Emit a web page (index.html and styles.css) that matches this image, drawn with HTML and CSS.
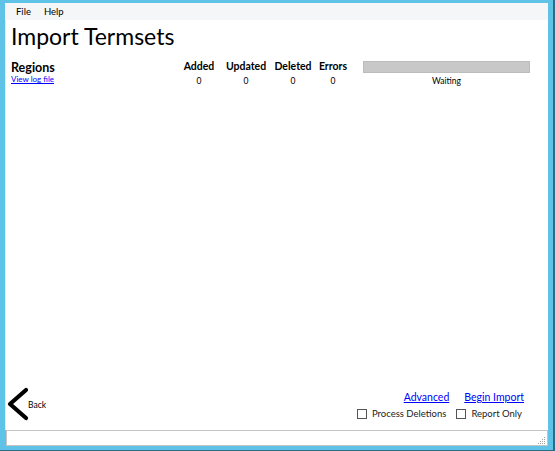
FILE: index.html
```html
<!DOCTYPE html>
<html>
<head>
<meta charset="utf-8">
<link rel="stylesheet" href="styles.css">
</head>
<body>
<div class="window">
  <div class="menubar">
    <span class="menu-item">File</span>
    <span class="menu-item">Help</span>
  </div>
  <div class="client">
    <h1 class="title">Import Termsets</h1>
    <div class="summary">
      <div class="regions">
        <div class="regions-label">Regions</div>
        <a class="log-link" href="#">View log file</a>
      </div>
      <div class="stats">
        <div class="stat-head">Added</div>
        <div class="stat-head">Updated</div>
        <div class="stat-head">Deleted</div>
        <div class="stat-head">Errors</div>
        <div class="progress"></div>
        <div class="stat-val">0</div>
        <div class="stat-val">0</div>
        <div class="stat-val">0</div>
        <div class="stat-val">0</div>
        <div class="progress-label">Waiting</div>
      </div>
    </div>
    <div class="spacer"></div>
    <div class="footer">
      <a class="back" href="#">
        <svg class="back-icon" width="22" height="34" viewBox="0 0 22 34">
          <polyline points="19,3 3,17 19,31" fill="none" stroke="#000" stroke-width="4.2" stroke-linecap="round" stroke-linejoin="round"/>
        </svg>
        <span class="back-text">Back</span>
      </a>
      <div class="actions">
        <div class="links">
          <a class="action-link" href="#">Advanced</a>
          <a class="action-link" href="#">Begin Import</a>
        </div>
        <div class="options">
          <label class="option"><span class="box"></span>Process Deletions</label>
          <label class="option"><span class="box"></span>Report Only</label>
        </div>
      </div>
    </div>
  </div>
  <div class="statusbar">
    <svg class="grip" width="10" height="10" viewBox="0 0 10 10">
      <rect x="8" y="2" width="1" height="1" fill="#a0a0a0"/>
      <rect x="6" y="4" width="1" height="1" fill="#a0a0a0"/>
      <rect x="8" y="4" width="1" height="1" fill="#a0a0a0"/>
      <rect x="4" y="6" width="1" height="1" fill="#a0a0a0"/>
      <rect x="6" y="6" width="1" height="1" fill="#a0a0a0"/>
      <rect x="8" y="6" width="1" height="1" fill="#a0a0a0"/>
      <rect x="2" y="8" width="1" height="1" fill="#a0a0a0"/>
      <rect x="4" y="8" width="1" height="1" fill="#a0a0a0"/>
      <rect x="6" y="8" width="1" height="1" fill="#a0a0a0"/>
      <rect x="8" y="8" width="1" height="1" fill="#a0a0a0"/>
    </svg>
  </div>
</div>
</body>
</html>
```
FILE: styles.css
```css
* { box-sizing: border-box; }
html, body { margin: 0; padding: 0; }
body {
  font-family: Lato, "Open Sans", sans-serif;
  color: #000;
}
.window {
  width: 555px;
  height: 451px;
  background: #5fc3e8;
  border-right: 2px solid #2c6c87;
  border-bottom: 1px solid #2c6c87;
  padding: 3px 5px 4px 5px;
  display: flex;
  flex-direction: column;
}
.menubar {
  height: 17px;
  background: #f5f6f7;
  display: flex;
  align-items: center;
  padding-left: 11px;
  gap: 13px;
  font-size: 9.5px;
}
.menu-item { line-height: 17px; }
.client {
  flex: 1;
  background: #fff;
  border-left: 1px solid #d6eef7;
  display: flex;
  flex-direction: column;
  padding: 0 18px 9px 5px;
}
.title {
  margin: 2px 0 0 0;
  font-weight: normal;
  font-size: 23px;
  line-height: 28px;
}
.summary {
  display: flex;
  margin-top: 11px;
}
.regions {
  flex: none;
  width: 165px;
  display: flex;
  flex-direction: column;
}
.regions-label {
  font-weight: bold;
  font-size: 12.5px;
  line-height: 13px;
}
.log-link {
  font-size: 8px;
  line-height: 10px;
  color: #0000ff;
}
.stats {
  flex: none;
  display: grid;
  grid-template-columns: 46px 48px 46px 34px 180px;
  align-items: center;
  margin-top: -1px;
}
.stat-head {
  font-weight: bold;
  font-size: 10.5px;
  line-height: 13px;
  text-align: center;
}
.stat-val {
  font-size: 8.5px;
  line-height: 11px;
  text-align: center;
  padding-top: 3px;
}
.progress {
  margin-left: 13px;
  height: 12px;
  background: #c8c8c8;
  border: 1px solid #bcbcbc;
}
.progress-label {
  margin-left: 13px;
  font-size: 8.5px;
  line-height: 11px;
  text-align: center;
  padding-top: 3px;
}
.spacer { flex: 1; }
.footer {
  display: flex;
  align-items: flex-end;
  justify-content: space-between;
  margin-right: 6px;
}
.back {
  display: flex;
  align-items: center;
  color: #000;
  text-decoration: none;
  margin-left: -4px;
}
.back-icon { display: block; }
.back-text {
  font-size: 8.5px;
  margin-left: -1px;
  margin-top: 2px;
}
.actions {
  display: flex;
  flex-direction: column;
  align-items: flex-end;
}
.links {
  display: flex;
  gap: 15px;
}
.action-link {
  color: #0000ff;
  font-size: 10.5px;
  line-height: 14px;
}
.options {
  display: flex;
  gap: 10px;
  margin-top: 3px;
  margin-right: 2px;
}
.option {
  display: flex;
  align-items: center;
  font-size: 9.5px;
  line-height: 14px;
  color: #222;
}
.box {
  width: 10px;
  height: 10px;
  border: 1px solid #555;
  background: #fff;
  margin-right: 5px;
}
.statusbar {
  height: 16px;
  background: #fff;
  border: 1px solid #c4c4c4;
  margin-left: 1px;
  display: flex;
  justify-content: flex-end;
  align-items: flex-end;
}
.grip { display: block; margin-right: 1px; }
```
